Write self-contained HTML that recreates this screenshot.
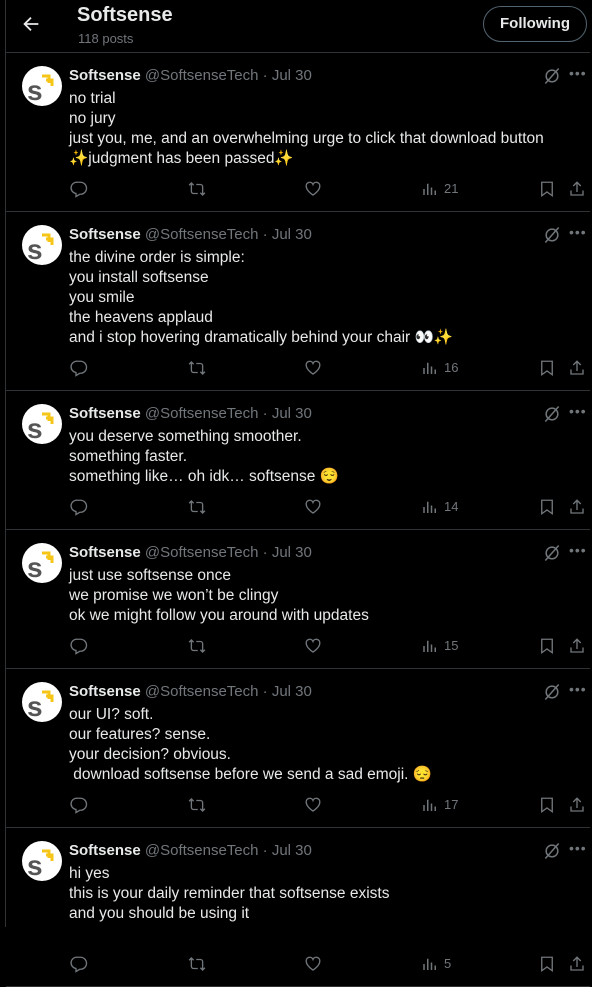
<!DOCTYPE html>
<html><head><meta charset="utf-8"><style>
*{box-sizing:border-box;margin:0;padding:0}
body{width:592px;height:927px;overflow:hidden;background:#000;color:#e7e9ea;font-family:"Liberation Sans","Noto Sans CJK JP",sans-serif;font-size:15px}
.wrap{position:relative;border-left:1px solid #2f3336;margin-left:5px;width:585px;height:927px}
.hdr{height:53px;border-bottom:1px solid #2f3336;position:relative}
.back{position:absolute;left:14px;top:13px}
.title{position:absolute;left:71px;top:4px;font-size:20px;font-weight:bold}
.sub{position:absolute;left:72px;top:31px;font-size:13px;color:#71767b}
.fbtn{position:absolute;left:477px;top:6px;width:104px;height:36px;border:1px solid #536471;border-radius:18px;font-weight:bold;text-align:center;line-height:34px;font-size:15px}
.tw{position:relative;border-bottom:1px solid #2f3336;padding:13px 0 12px 63px}
.av{position:absolute;left:16px;top:13px;width:40px;height:40px;border-radius:50%;background:#fff;overflow:hidden}
.nm{height:20px;line-height:20px;white-space:nowrap}
.nm b{font-weight:bold}
.nm span{color:#71767b}
.tx{margin-top:3px;line-height:20px;white-space:nowrap;font-size:15.5px}
.act{position:relative;height:20px;margin-top:10px}
.act svg{position:absolute;top:1px}
.cnt{position:absolute;left:375px;top:2px;font-size:13px;color:#71767b}
.tr{position:absolute;top:13px;left:536px}
.dots{position:absolute;top:12px;left:563px;color:#71767b;font-size:14px;letter-spacing:1px}
</style></head><body><div class="wrap">
<div class="hdr">
<svg class="back" width="22" height="22" viewBox="0 0 24 24"><path d="M20 11H7.4l5.3-5.3-1.4-1.4L3.6 12l7.7 7.7 1.4-1.4L7.4 13H20z" fill="#e7e9ea"/></svg>
<div class="title">Softsense</div><div class="sub">118 posts</div>
<div class="fbtn">Following</div>
</div>
</div>
<script>
var tweets=[
["no trial<br>no jury<br>just you, me, and an overwhelming urge to click that download button<br>✨judgment has been passed✨","21"],
["the divine order is simple:<br>you install softsense<br>you smile<br>the heavens applaud<br>and i stop hovering dramatically behind your chair 👀✨","16"],
["you deserve something smoother.<br>something faster.<br>something like… oh idk… softsense 😌","14"],
["just use softsense once<br>we promise we won’t be clingy<br>ok we might follow you around with updates","15"],
["our UI? soft.<br>our features? sense.<br>your decision? obvious.<br>&nbsp;download softsense before we send a sad emoji. 😔","17"],
["hi yes<br>this is your daily reminder that softsense exists<br>and you should be using it<br>&nbsp;","5"]];
var g='#71767b';
var av='<div class="av"><svg width="40" height="40" viewBox="0 0 40 40"><text x="5" y="34" font-family="Liberation Sans,sans-serif" font-weight="bold" font-size="28" fill="#555">s</text><path d="M20 10h7v7M24 14h6v6" stroke="#f5c518" stroke-width="3" fill="none"/></svg></div>';
var icons='<svg style="left:1px" width="18" height="18" viewBox="0 0 24 24"><path d="M10 3h4a8 8 0 010 16h-1l-5 3v-4A7.5 7.5 0 0110 3z" fill="none" stroke="'+g+'" stroke-width="1.8"/></svg>'+
'<svg style="left:119px" width="18" height="18" viewBox="0 0 24 24"><path d="M4.5 4v11a3 3 0 003 3H13M1.5 7l3-3 3 3M19.5 20V9a3 3 0 00-3-3H11M22.5 17l-3 3-3-3" fill="none" stroke="'+g+'" stroke-width="1.8"/></svg>'+
'<svg style="left:235px" width="18" height="18" viewBox="0 0 24 24"><path d="M12 20s-9-5.5-9-11.5A4.7 4.7 0 0112 6a4.7 4.7 0 019 2.5C21 14.5 12 20 12 20z" fill="none" stroke="'+g+'" stroke-width="1.8"/></svg>'+
'<svg style="left:352px" width="18" height="18" viewBox="0 0 24 24"><path d="M4 12v8M9 5v15M14 10v10M19 14v6" stroke="'+g+'" stroke-width="2"/></svg>'+
'<svg style="left:469px" width="18" height="18" viewBox="0 0 24 24"><path d="M5 3h14v18l-7-5-7 5z" fill="none" stroke="'+g+'" stroke-width="1.8"/></svg>'+
'<svg style="left:499px" width="18" height="18" viewBox="0 0 24 24"><path d="M12 3v13M7 8l5-5 5 5M4 14v6h16v-6" fill="none" stroke="'+g+'" stroke-width="1.8"/></svg>';
var tr='<svg class="tr" width="20" height="20" viewBox="0 0 24 24"><circle cx="12" cy="12" r="7" fill="none" stroke="'+g+'" stroke-width="1.8"/><path d="M4 21L20 3" stroke="'+g+'" stroke-width="1.8"/></svg><div class="dots">•••</div>';
var h='';
tweets.forEach(function(t){h+='<div class="tw">'+av+tr+'<div class="nm"><b>Softsense</b> <span>@SoftsenseTech · Jul 30</span></div><div class="tx">'+t[0]+'</div><div class="act">'+icons+'<div class="cnt">'+t[1]+'</div></div></div>';});
document.querySelector('.wrap').insertAdjacentHTML('beforeend',h);
</script>
</body></html>
